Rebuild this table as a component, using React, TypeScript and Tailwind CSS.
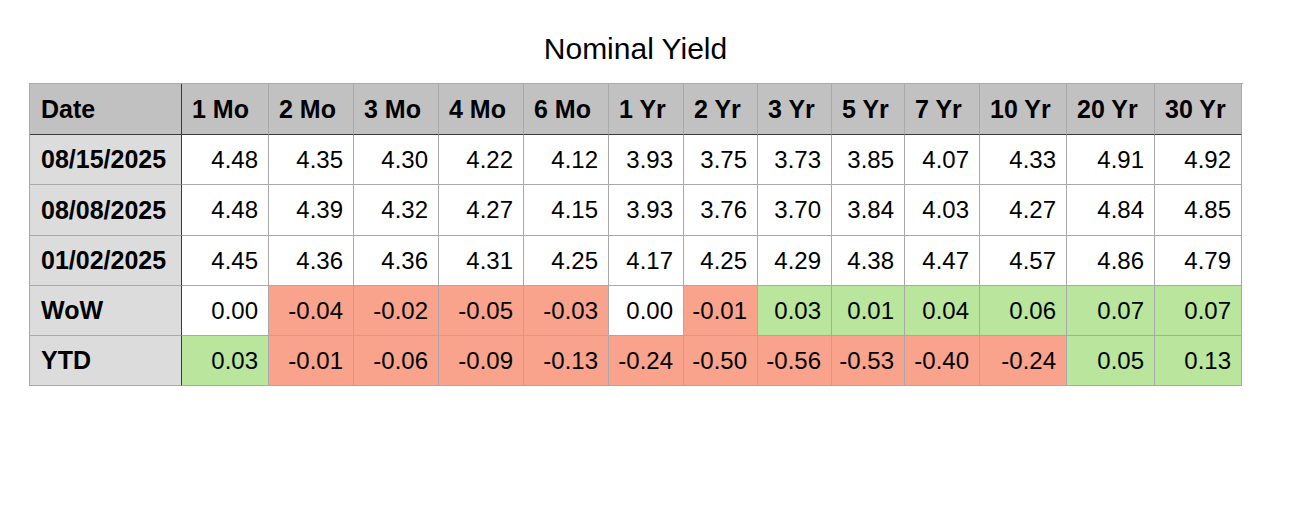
import React from "react";

const headers = ["Date", "1 Mo", "2 Mo", "3 Mo", "4 Mo", "6 Mo", "1 Yr", "2 Yr", "3 Yr", "5 Yr", "7 Yr", "10 Yr", "20 Yr", "30 Yr"];

const rows: { label: string; values: string[]; colored?: boolean }[] = [
  { label: "08/15/2025", values: ["4.48", "4.35", "4.30", "4.22", "4.12", "3.93", "3.75", "3.73", "3.85", "4.07", "4.33", "4.91", "4.92"] },
  { label: "08/08/2025", values: ["4.48", "4.39", "4.32", "4.27", "4.15", "3.93", "3.76", "3.70", "3.84", "4.03", "4.27", "4.84", "4.85"] },
  { label: "01/02/2025", values: ["4.45", "4.36", "4.36", "4.31", "4.25", "4.17", "4.25", "4.29", "4.38", "4.47", "4.57", "4.86", "4.79"] },
  { label: "WoW", colored: true, values: ["0.00", "-0.04", "-0.02", "-0.05", "-0.03", "0.00", "-0.01", "0.03", "0.01", "0.04", "0.06", "0.07", "0.07"] },
  { label: "YTD", colored: true, values: ["0.03", "-0.01", "-0.06", "-0.09", "-0.13", "-0.24", "-0.50", "-0.56", "-0.53", "-0.40", "-0.24", "0.05", "0.13"] },
];

function bgFor(v: string, colored?: boolean) {
  if (!colored) return "bg-white";
  const n = parseFloat(v);
  if (n > 0) return "bg-[#b9e59c]";
  if (n < 0) return "bg-[#f9a28c]";
  return "bg-white";
}

export default function App() {
  return (
    <div
      className="w-[1294px] h-[520px] bg-white pl-[29px] pt-[34px] text-black"
      style={{ fontFamily: '"Liberation Sans", Arial, sans-serif' }}
    >
      <div className="w-[1213px] text-center text-[30px] leading-[30px]">Nominal Yield</div>
      <div className="mt-[19px] w-[1214px] border-l border-t border-[#a9a9a9] grid grid-cols-[152px_87px_85px_85px_85px_85px_75px_74px_74px_73px_75px_87px_88px_87px]">
        {headers.map((h, i) => (
          <div
            key={h}
            className={`h-[51px] flex items-center bg-[#c1c1c1] font-bold text-[25px] leading-[25px] border-b border-b-[#3a3a3a] border-r ${
              i === 0 ? "pl-[11px] border-r-[#3a3a3a]" : "pl-[10px] border-r-[#a9a9a9]"
            }`}
          >
            {h}
          </div>
        ))}
        {rows.map((r, ri) => (
          <React.Fragment key={r.label}>
            <div
              className={`${ri === 1 ? "h-[51px]" : "h-[50px]"} flex items-center pl-[11px] bg-[#dcdcdc] font-bold text-[25px] leading-[25px] border-b border-b-[#a9a9a9] border-r border-r-[#3a3a3a]`}
            >
              {r.label}
            </div>
            {r.values.map((v, vi) => (
              <div
                key={vi}
                className={`${ri === 1 ? "h-[51px]" : "h-[50px]"} flex items-center justify-end pr-[10px] text-[24px] leading-[24px] border-b border-r border-[#a9a9a9] ${bgFor(v, r.colored)}`}
              >
                {v}
              </div>
            ))}
          </React.Fragment>
        ))}
      </div>
    </div>
  );
}
